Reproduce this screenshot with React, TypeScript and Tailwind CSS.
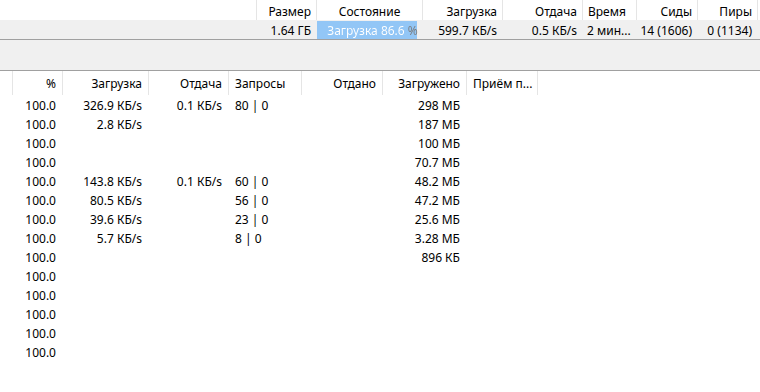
const topCols = [
  { label: "", w: 256, align: "right" },
  { label: "Размер", w: 60, align: "right" },
  { label: "Состояние", w: 106, align: "center" },
  { label: "Загрузка", w: 80, align: "right" },
  { label: "Отдача", w: 80, align: "right" },
  { label: "Время", w: 54, align: "left" },
  { label: "Сиды", w: 61, align: "right" },
  { label: "Пиры", w: 60, align: "right" },
];

const peerCols = [
  { label: "", w: 10, align: "right" },
  { label: "%", w: 50, align: "right" },
  { label: "Загрузка", w: 86, align: "right" },
  { label: "Отдача", w: 80, align: "right" },
  { label: "Запросы", w: 73, align: "left" },
  { label: "Отдано", w: 81, align: "right" },
  { label: "Загружено", w: 84, align: "right" },
  { label: "Приём п...", w: 71, align: "left" },
];

const peers: string[][] = [
  ["100.0", "326.9 КБ/s", "0.1 КБ/s", "80 | 0", "", "298 МБ"],
  ["100.0", "2.8 КБ/s", "", "", "", "187 МБ"],
  ["100.0", "", "", "", "", "100 МБ"],
  ["100.0", "", "", "", "", "70.7 МБ"],
  ["100.0", "143.8 КБ/s", "0.1 КБ/s", "60 | 0", "", "48.2 МБ"],
  ["100.0", "80.5 КБ/s", "", "56 | 0", "", "47.2 МБ"],
  ["100.0", "39.6 КБ/s", "", "23 | 0", "", "25.6 МБ"],
  ["100.0", "5.7 КБ/s", "", "8 | 0", "", "3.28 МБ"],
  ["100.0", "", "", "", "", "896 КБ"],
  ["100.0", "", "", "", "", ""],
  ["100.0", "", "", "", "", ""],
  ["100.0", "", "", "", "", ""],
  ["100.0", "", "", "", "", ""],
  ["100.0", "", "", "", "", ""],
];

function alignCls(a: string) {
  if (a === "center") return "justify-center";
  if (a === "left") return "justify-start";
  return "justify-end";
}

function Progress() {
  // fill behind, one text whose colour switches from white to grey where the fill ends
  return (
    <div className="relative h-[18px] w-full">
      <div className="absolute left-0 top-0 h-full w-[100px] bg-[#92c6f6]" />
      <div className="absolute inset-0 flex items-center justify-center pl-[6px] pt-[2px]">
        <span className="whitespace-nowrap bg-[linear-gradient(to_right,#ffffff_78px,#7a7a7a_78px)] bg-clip-text text-transparent">
          Загрузка 86.6 %
        </span>
      </div>
    </div>
  );
}

export default function App() {
  const top = ["", "1.64 ГБ", "", "599.7 КБ/s", "0.5 КБ/s", "2 мин...", "14 (1606)", "0 (1134)"];
  return (
    <div
      className="h-[392px] w-[760px] overflow-hidden bg-white text-[12px] text-black"
      style={{ fontFamily: '"Noto Sans", "Open Sans", sans-serif' }}
    >
      {/* torrent list header */}
      <div className="flex h-[20px]">
        {topCols.map((c, i) => (
          <div
            key={i}
            style={{ width: c.w }}
            className={`flex shrink-0 items-center px-[5px] pt-[3px] ${alignCls(c.align)} ${i > 0 ? "border-l border-[#e5e5e5]" : ""}`}
          >
            {c.label}
          </div>
        ))}
        <div className="flex-1 border-l border-[#e5e5e5]" />
      </div>

      {/* selected torrent row */}
      <div className="flex h-[19px] bg-[#f0f0f0]">
        {topCols.map((c, i) => (
          <div
            key={i}
            style={{ width: c.w }}
            className={`flex shrink-0 items-center whitespace-nowrap ${i === 2 ? "pl-[1px]" : "px-[5px] pt-[2px]"} ${alignCls(c.align)}`}
          >
            {i === 2 ? <Progress /> : top[i]}
          </div>
        ))}
      </div>

      <div className="h-px bg-[#a0a0a0]" />
      <div className="h-[30px] bg-[#f0f0f0]" />
      <div className="h-px bg-[#a0a0a0]" />

      {/* peers header */}
      <div className="flex h-[24px]">
        {peerCols.map((c, i) => (
          <div
            key={i}
            style={{ width: c.w }}
            className={`flex shrink-0 items-center whitespace-nowrap px-[6px] pt-[2px] ${alignCls(c.align)} ${i > 0 ? "border-l border-[#e5e5e5]" : ""}`}
          >
            {c.label}
          </div>
        ))}
        <div className="border-l border-[#e5e5e5]" />
      </div>

      {/* peers rows */}
      <div className="flex flex-col">
        {peers.map((r, ri) => (
          <div key={ri} className="flex h-[19px]">
            {peerCols.map((c, i) => (
              <div
                key={i}
                style={{ width: c.w }}
                className={`flex shrink-0 items-center whitespace-nowrap px-[6px] pt-[2px] ${alignCls(c.align)} ${i > 0 ? "border-l border-transparent" : ""}`}
              >
                {i === 0 ? "" : r[i - 1] ?? ""}
              </div>
            ))}
          </div>
        ))}
      </div>
    </div>
  );
}
